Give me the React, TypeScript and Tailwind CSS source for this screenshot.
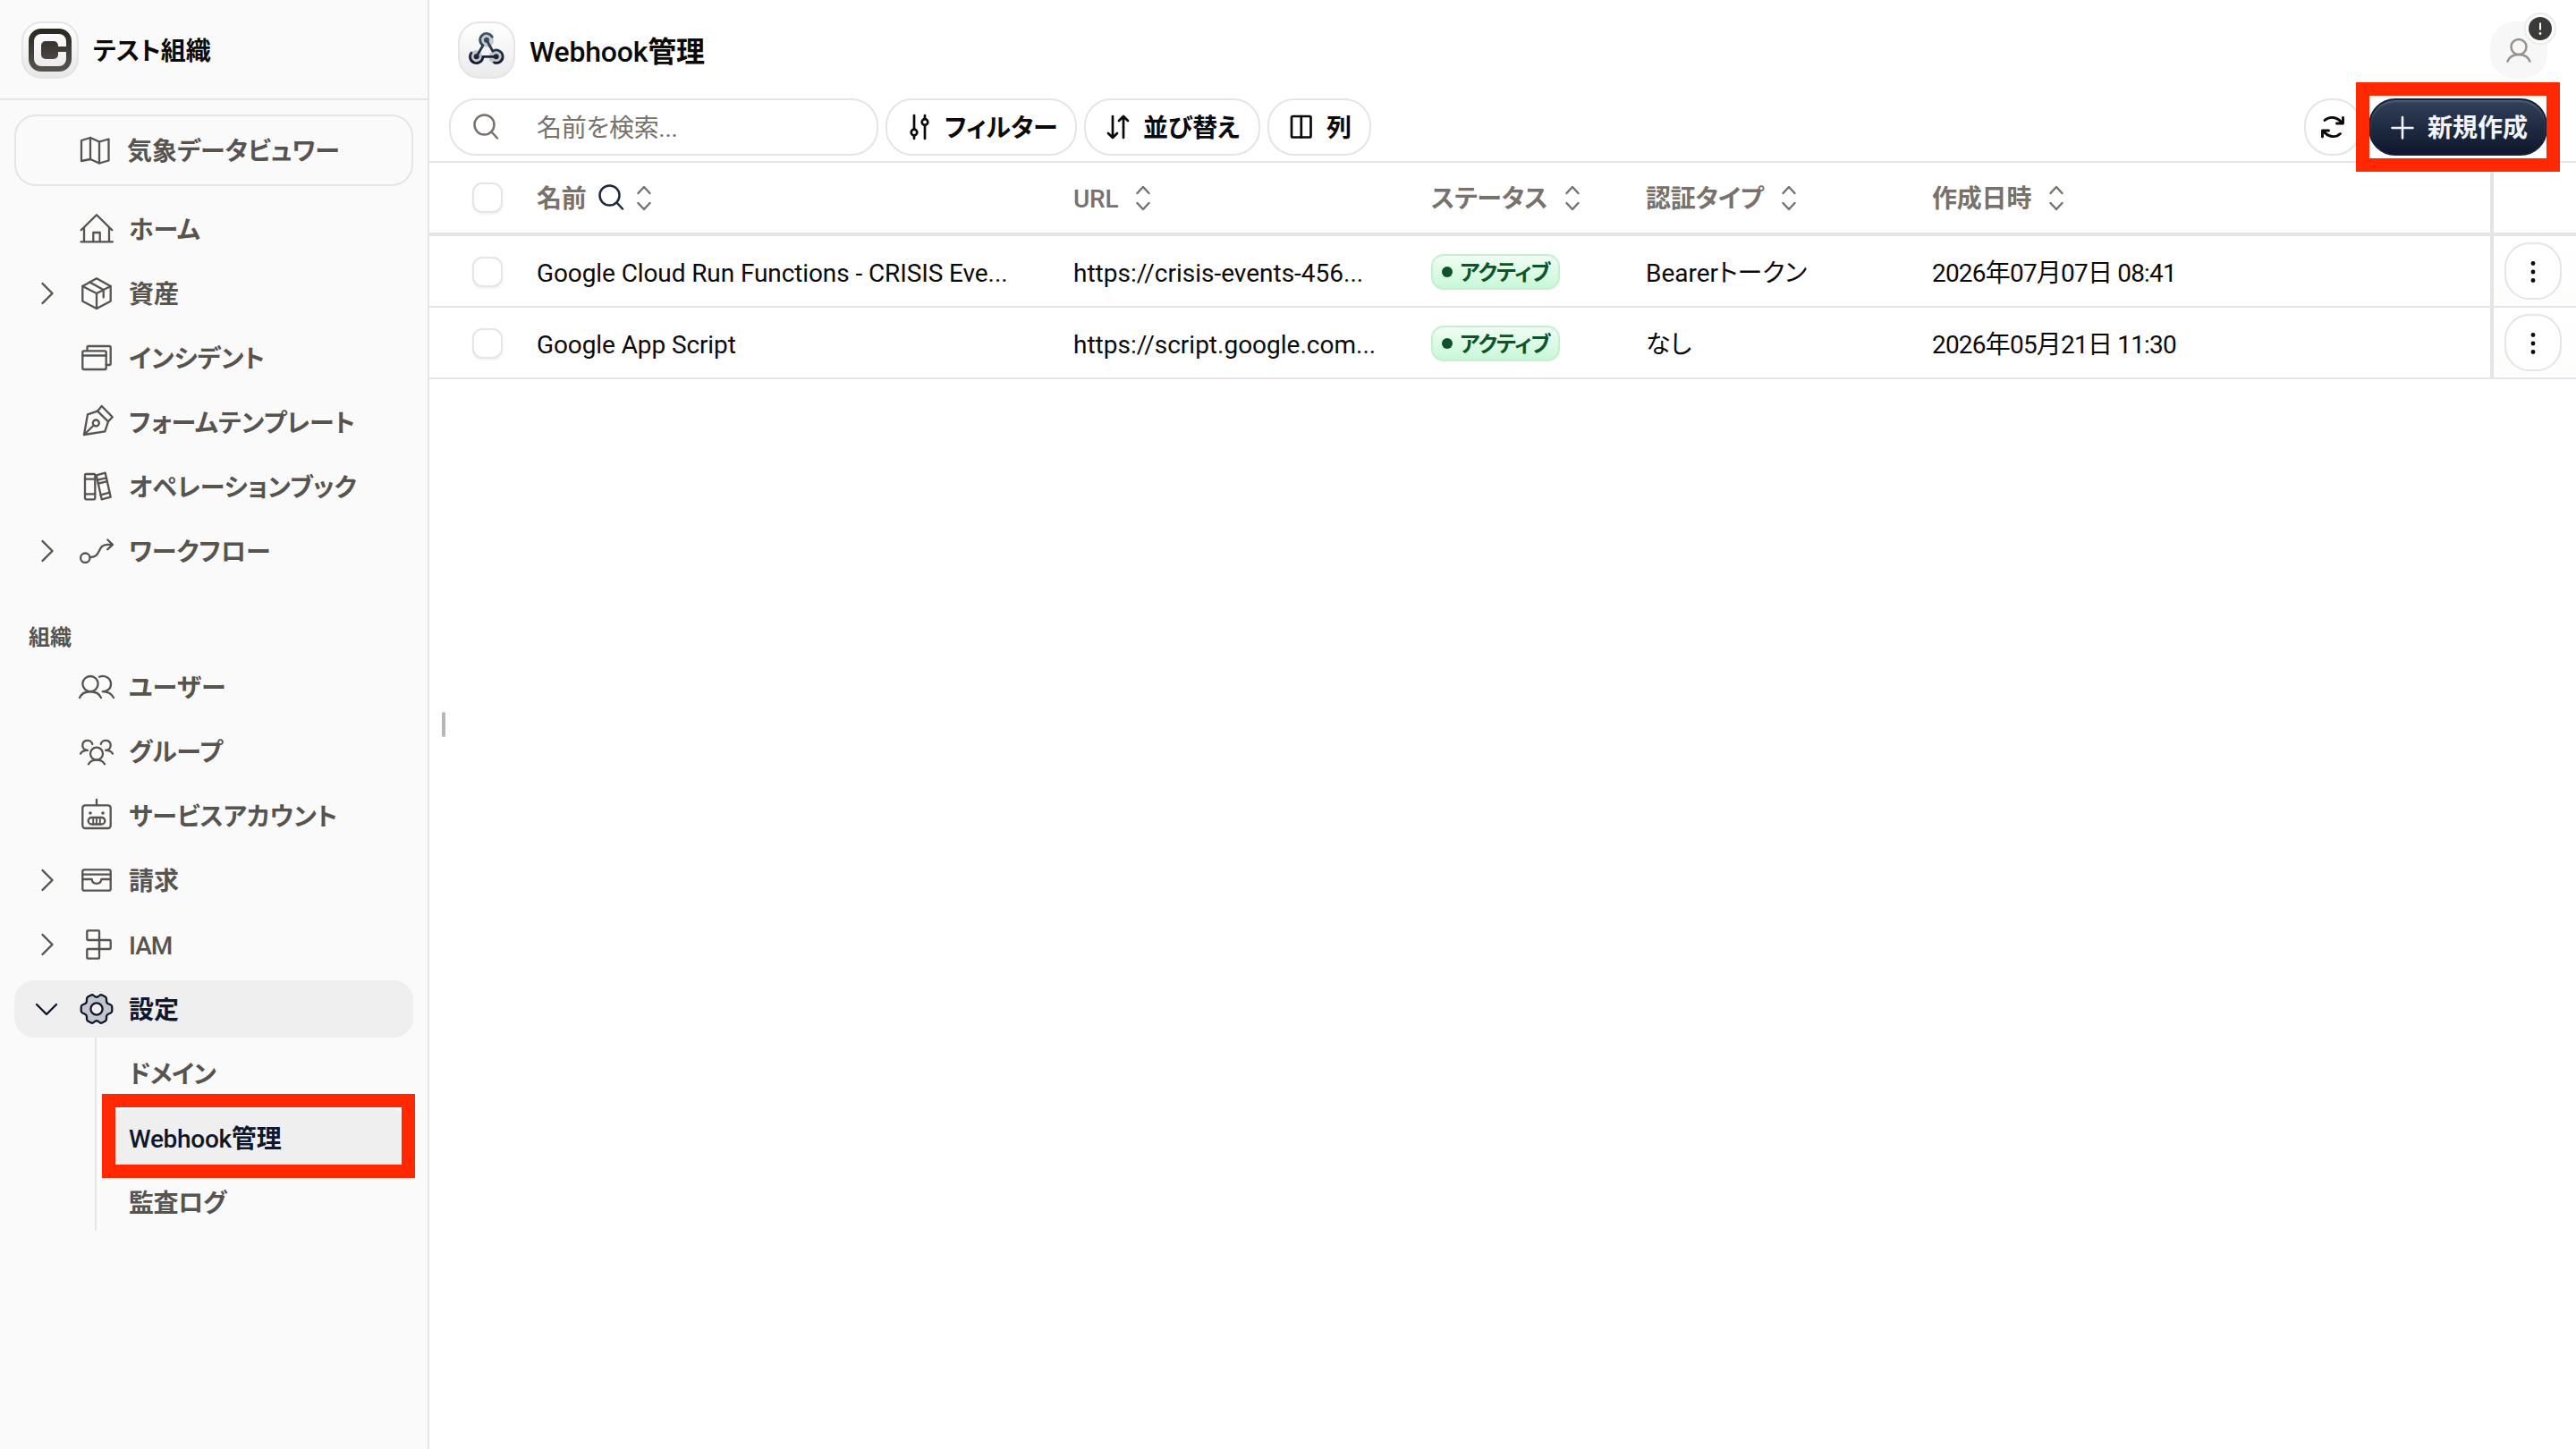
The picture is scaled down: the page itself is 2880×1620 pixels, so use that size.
import type { ReactNode } from 'react';
import clsx from 'clsx';

type NavItem = {
  label: string;
  icon: ReactNode;
  expandable?: boolean;
  latin?: boolean;
};

type Webhook = {
  name: string;
  url: string;
  auth: string;
  createdAt: string;
};

function Icon({ children }: { children: ReactNode }) {
  return (
    <svg
      viewBox="0 0 48 48"
      fill="none"
      stroke="currentColor"
      strokeWidth={2.3}
      strokeLinecap="round"
      strokeLinejoin="round"
      className="size-12 shrink-0"
    >
      {children}
    </svg>
  );
}

function Chevron({ open }: { open?: boolean }) {
  return (
    <svg
      viewBox="0 0 32 32"
      fill="none"
      stroke="currentColor"
      strokeWidth={2.4}
      strokeLinecap="round"
      strokeLinejoin="round"
      className="size-8 shrink-0"
    >
      <path d={open ? 'M5 11L16 22L27 11' : 'M10.5 5L21.5 16L10.5 27'} />
    </svg>
  );
}

const MapIcon = (
  <Icon>
    <path d="M7 13L17 10L27 14.5L37.5 11.5V35.5L27 38.5L17 34L7 36Z" />
    <path d="M17 10V34M27 14.5V38.5" />
  </Icon>
);

const HomeIcon = (
  <Icon>
    <path d="M6.7 25.3L24 8.3L41.3 25.3M10 22.5V38M38 22.5V38M6.5 38.3H42" />
    <path d="M20.3 38V28H27.7V38" />
  </Icon>
);

const BoxIcon = (
  <Icon>
    <path d="M24 7.3L39.7 16V32.7L24 41L8.3 32.7V16Z" />
    <path d="M8.3 16L24 24L39.7 16M24 24V41M16.3 11.5L31.7 20V28.5" />
  </Icon>
);

const WindowsIcon = (
  <Icon>
    <rect x="8.3" y="16.3" width="26.4" height="20.7" rx="1.5" />
    <path d="M8.3 21.5H34.7M13.5 16V12.5Q13.5 11 15 11H38.2Q39.7 11 39.7 12.5V30.5Q39.7 32 38.2 32H34.7" />
  </Icon>
);

const PenIcon = (
  <Icon>
    <path d="M10 38L14 15.3L25 11.7L37 23.3L33.3 34.3Z" />
    <path d="M25 11.7L29.7 6L41.7 18.3L37 23.3M10 38L20.8 27.5" />
    <circle cx="23.3" cy="25" r="3.5" />
  </Icon>
);

const BooksIcon = (
  <Icon>
    <rect x="11" y="10" width="11.3" height="28.3" rx="1.2" />
    <path d="M11 15.7H22.3M11 32.3H22.3" />
    <path d="M23.7 11.3L33.7 8.7L39.7 35.7L29.7 38.3Z" />
    <path d="M24.7 16.7L35 14.3M25.7 20.7L36 18.2M28.5 33.3L38.7 30.7" />
  </Icon>
);

const FlowIcon = (
  <Icon>
    <circle cx="11.3" cy="31.7" r="5.2" />
    <path d="M16.8 31C29.5 31.5 24 17 36 16.8H41.7M36.3 11.5L42 16.8L36.3 22.2" />
  </Icon>
);

const UsersIcon = (
  <Icon>
    <circle cx="17" cy="20.6" r="8.6" />
    <path d="M5 36C9 27 25 27 29 36M27 12.8C33 10 40 14 40 20.7C40 26 36 29.2 30.8 29.2C36.5 29.2 40.5 31.5 43 36" />
  </Icon>
);

const GroupIcon = (
  <Icon>
    <circle cx="24" cy="26.6" r="7" />
    <path d="M15 38.3C18.5 32 29.5 32 33 38.3" />
    <path d="M19.3 16C18 10 8.3 10.5 8.3 17.3C8.3 21 11 22.8 14 22.8C10.5 22.8 7.5 24 6 26.6" />
    <path d="M28.7 16C30 10 39.7 10.5 39.7 17.3C39.7 21 37 22.8 34 22.8C37.5 22.8 40.5 24 42 26.6" />
  </Icon>
);

const RobotIcon = (
  <Icon>
    <rect x="8.3" y="12.3" width="31.4" height="25.7" rx="3" />
    <rect x="14.7" y="26" width="18.6" height="7.5" rx="3.7" />
    <path d="M24 6V12" />
    <path d="M20.2 26V33.5M24 26V33.5M27.8 26V33.5" strokeWidth={1.9} />
    <circle cx="17" cy="21" r="1" fill="currentColor" strokeWidth={1.5} />
    <circle cx="31" cy="21" r="1" fill="currentColor" strokeWidth={1.5} />
  </Icon>
);

const BillingIcon = (
  <Icon>
    <rect x="8.3" y="12.3" width="31.4" height="23.4" rx="2" />
    <path d="M8.3 17.7H39.7M8.3 23H18.7C19 26 21 27.8 24 27.8C27 27.8 29 26 29.3 23H39.7" />
  </Icon>
);

const IamIcon = (
  <Icon>
    <rect x="13.3" y="8.3" width="13.7" height="10.7" rx="1" />
    <rect x="27" y="19" width="12.7" height="10" rx="1" />
    <rect x="13.3" y="29" width="13.7" height="10.7" rx="1" />
    <path d="M27 17V31" />
  </Icon>
);

const GearIcon = (
  <Icon>
    <path
      d="M18.5 8.3Q19.500 8 20.500 8.800L22.500 10.300Q24 11.200 25.500 10.300L27.500 8.800Q28.500 8 29.500 8.300L33.500 10.300Q35 11.200 35 12.800V15.500Q35.200 17.300 37 18.300L39.500 19.300Q41.300 20 41.300 22V26Q41.300 28 39.500 28.700L37 29.700Q35.200 30.700 35 32.500V35.200Q35 36.800 33.500 37.700L29.500 39.700Q28.500 40 27.500 39.200L25.500 37.700Q24 36.800 22.500 37.700L20.500 39.200Q19.500 40 18.500 39.700L14.500 37.700Q13 36.800 13 35.200V32.500Q12.800 30.700 11 29.700L8.500 28.700Q6.700 28 6.700 26V22Q6.700 20 8.500 19.300L11 18.300Q12.800 17.300 13 15.500V12.800Q13 11.200 14.500 10.300Z"
      fill="#c3c6cc"
    />
    <circle cx="24" cy="24" r="6.6" fill="#efefef" />
  </Icon>
);

const mainNav: NavItem[] = [
  { label: 'ホーム', icon: HomeIcon },
  { label: '資産', icon: BoxIcon, expandable: true },
  { label: 'インシデント', icon: WindowsIcon },
  { label: 'フォームテンプレート', icon: PenIcon },
  { label: 'オペレーションブック', icon: BooksIcon },
  { label: 'ワークフロー', icon: FlowIcon, expandable: true },
];

const orgNav: NavItem[] = [
  { label: 'ユーザー', icon: UsersIcon },
  { label: 'グループ', icon: GroupIcon },
  { label: 'サービスアカウント', icon: RobotIcon },
  { label: '請求', icon: BillingIcon, expandable: true },
  { label: 'IAM', icon: IamIcon, expandable: true, latin: true },
];

const webhooks: Webhook[] = [
  {
    name: 'Google Cloud Run Functions - CRISIS Eve...',
    url: 'https://crisis-events-456...',
    auth: 'Bearerトークン',
    createdAt: '2026年07月07日 08:41',
  },
  {
    name: 'Google App Script',
    url: 'https://script.google.com...',
    auth: 'なし',
    createdAt: '2026年05月21日 11:30',
  },
];

function NavRow({ item }: { item: NavItem }) {
  return (
    <li className="flex h-16 items-center rounded-3xl pl-4">
      <span className="flex w-[52px] pl-[5px]">{item.expandable && <Chevron />}</span>
      {item.icon}
      <span className={clsx('ml-3 pt-1', item.latin ? 'font-medium tracking-[-1px]' : 'font-bold')}>{item.label}</span>
    </li>
  );
}

function Sidebar() {
  return (
    <aside className="flex w-[480px] shrink-0 flex-col border-r-2 border-[#e5e5e5] bg-[#fafafa] text-[#57534e]">
      <div className="flex h-28 shrink-0 items-center gap-4 border-b-2 border-[#e5e5e5] pt-0.5 pl-6">
        <div className="flex size-16 items-center justify-center rounded-[22px] border-2 border-[#e5e5e5] bg-linear-to-b from-white to-[#e7e7e7]">
          <svg viewBox="0 0 48 48" className="size-12" fill="none">
            <defs>
              <linearGradient id="brand" x1="0" y1="0" x2="0" y2="48" gradientUnits="userSpaceOnUse">
                <stop stopColor="#292521" />
                <stop offset="1" stopColor="#57534e" />
              </linearGradient>
            </defs>
            <rect x="3" y="3" width="42" height="42" rx="11" stroke="url(#brand)" strokeWidth="6" />
            <rect x="14" y="14" width="19" height="20" rx="5" fill="url(#brand)" />
            <rect x="30" y="20" width="14" height="6" fill="url(#brand)" />
          </svg>
        </div>
        <span className="pt-1 font-bold text-[#0c0a09]">テスト組織</span>
      </div>

      <nav className="flex flex-col pt-4 pr-4 pl-4">
        <div className="flex h-20 items-center rounded-3xl border-2 border-[#e5e5e5] pl-[66px]">
          {MapIcon}
          <span className="ml-[10px] pt-1 font-bold">気象データビュワー</span>
        </div>

        <ul className="mt-4 flex flex-col gap-2">
          {mainNav.map((item) => (
            <NavRow key={item.label} item={item} />
          ))}
        </ul>

        <p className="mt-11 h-10 pl-4 text-[24px] leading-[42px] font-bold">組織</p>

        <ul className="mt-1 flex flex-col gap-2">
          {orgNav.map((item) => (
            <NavRow key={item.label} item={item} />
          ))}
          <li className="flex h-16 items-center rounded-[22px] bg-[#efefef] pl-4 text-[#0f172b]">
            <span className="flex w-[52px] pl-1">
              <Chevron open />
            </span>
            {GearIcon}
            <span className="ml-3 pt-1 font-bold">設定</span>
          </li>
        </ul>

        {/* Settings submenu */}
        <ul className="ml-[90px] flex flex-col gap-2 border-l-2 border-[#e5e5e5] pt-2 pl-2">
          <li className="flex h-16 items-center pt-1 pl-7 font-bold tracking-[-0.8px]">ドメイン</li>
          <li className="relative flex h-16 items-center rounded-3xl bg-[#efefef] pt-1 pl-7 text-[#0f172b]">
            <span className="font-medium tracking-[-0.3px]">Webhook</span>
            <span className="font-bold">管理</span>
            <span className="absolute top-[-17px] left-[-2px] h-[94px] w-[350px] border-[15px] border-[#ff2800]" />
          </li>
          <li className="flex h-16 items-center pt-1 pl-7 font-bold tracking-[-0.5px]">監査ログ</li>
        </ul>
      </nav>
    </aside>
  );
}

function SearchIcon() {
  return (
    <svg viewBox="0 0 32 32" fill="none" stroke="currentColor" strokeWidth={2.5} strokeLinecap="round" className="size-8">
      <circle cx="13.5" cy="13.5" r="11" />
      <path d="M21.5 21.5L28 28.5" />
    </svg>
  );
}

function SortIcon() {
  return (
    <svg
      viewBox="0 0 32 32"
      fill="none"
      stroke="currentColor"
      strokeWidth={2.4}
      strokeLinecap="round"
      strokeLinejoin="round"
      className="size-8"
    >
      <path d="M9.5 11L16 4L22.5 11M9.5 22L16 29L22.5 22" />
    </svg>
  );
}

function Header() {
  return (
    <header className="flex h-[110px] items-center px-8 pt-0.5">
      <div className="flex size-16 items-center justify-center rounded-[24px] border-2 border-[#e5e5e5] bg-linear-to-b from-white to-[#ebebeb]">
        <svg viewBox="0 0 48 48" fill="none" strokeLinecap="round" strokeLinejoin="round" className="size-12">
          <defs>
            <linearGradient id="hook" x1="0" y1="5" x2="0" y2="40" gradientUnits="userSpaceOnUse">
              <stop stopColor="#45556c" />
              <stop offset="1" stopColor="#0f172b" />
            </linearGradient>
          </defs>
          <g fill="#1d293d" opacity={0.22}>
            <circle cx="25" cy="13.7" r="7" />
            <circle cx="12" cy="31.3" r="7" />
            <circle cx="33.5" cy="32" r="7" />
          </g>
          <path
            d="M30.3 9.3A7.2 7.2 0 1 0 20 18.7L12.7 31.3M24 12.7L30.9 25.2A7.200 7.200 0 1 1 32.500 38M7 27A7.200 7.200 0 1 0 19.900 31.300H34.700"
            stroke="url(#hook)"
            strokeWidth={2.8}
          />
          <g fill="url(#hook)">
            <circle cx="24" cy="12.7" r="3" />
            <circle cx="12.7" cy="31.3" r="3" />
            <circle cx="34.7" cy="31.3" r="3" />
          </g>
        </svg>
      </div>
      <h1 className="ml-4 pt-1 text-[32px] tracking-[-0.2px] text-[#0c0a09]">
        <span className="font-medium">Webhook</span>
        <span className="font-bold">管理</span>
      </h1>

      <div className="relative ml-auto flex size-16 items-center justify-center rounded-[28px] bg-[#f7f7f7] text-[#98918b]">
        <svg viewBox="0 0 32 32" fill="none" stroke="currentColor" strokeWidth={2.5} strokeLinecap="round" className="size-8">
          <circle cx="16" cy="12.5" r="8.5" />
          <path d="M3.5 28.5C7.5 18.500 24.500 18.500 28.500 28.500" />
        </svg>
        <span className="absolute -top-[10px] -right-[10px] flex size-9 items-center justify-center rounded-full border-2 border-[#ececec] bg-white">
          <span className="flex size-[26px] items-center justify-center rounded-full bg-[#3a3a38]">
            <svg viewBox="0 0 26 26" className="size-[26px]">
              <path d="M13 6.5V14.5" stroke="#fff" strokeWidth={2} />
              <circle cx="13" cy="18.5" r="1.4" fill="#fff" />
            </svg>
          </span>
        </span>
      </div>
    </header>
  );
}

function ToolButton({ icon, label, className }: { icon: ReactNode; label: string; className: string }) {
  return (
    <button
      className={clsx(
        'flex h-16 items-center gap-3 rounded-[30px] border-2 border-[#e5e5e5] bg-white pl-5 font-bold text-[#0c0a09]',
        className,
      )}
    >
      <svg
        viewBox="0 0 32 32"
        fill="none"
        stroke="currentColor"
        strokeWidth={2.7}
        strokeLinecap="round"
        strokeLinejoin="round"
        className="size-8 shrink-0"
      >
        {icon}
      </svg>
      <span className="pt-1 whitespace-nowrap">{label}</span>
    </button>
  );
}

function Toolbar() {
  return (
    <div className="flex h-[72px] items-start gap-2 border-b-2 border-[#e5e5e5] pr-8 pl-[22px]">
      <div className="flex h-16 w-[480px] items-center rounded-[30px] border-2 border-[#e5e5e5] bg-white pl-6 text-[#78716c]">
        <SearchIcon />
        <span className="ml-10 pt-1 tracking-[-0.3px]">名前を検索...</span>
      </div>

      <ToolButton
        className="w-[214px]"
        label="フィルター"
        icon={
          <>
            <path d="M10 3V18.5M10 25.5V29M22 3V7M22 14V29" />
            <circle cx="10" cy="22" r="3.3" />
            <circle cx="22" cy="10.5" r="3.3" />
          </>
        }
      />
      <ToolButton
        className="w-[197px]"
        label="並び替え"
        icon={<path d="M10 4V28M5 23L10 28L15 23M22 28V4M17 9L22 4L27 9" />}
      />
      <ToolButton
        className="w-[116px]"
        label="列"
        icon={
          <>
            <rect x="5" y="4" width="21.5" height="23.5" rx="1.5" />
            <path d="M15.8 4V27.5" />
          </>
        }
      />

      <button className="ml-auto flex size-16 items-center justify-center rounded-[30px] border-2 border-[#e5e5e5] bg-white text-[#0c0a09]">
        <svg
          viewBox="0 0 32 32"
          fill="none"
          stroke="currentColor"
          strokeWidth={2.9}
          strokeLinecap="round"
          strokeLinejoin="round"
          className="size-8"
        >
          <path d="M7 8.5C12.500 3.500 21 4.500 26.500 11.500M27.500 5.500V12H20.500M24.500 23.500C19 28.500 11 27.500 5.500 20.500M4.500 27V20H11.500" />
        </svg>
      </button>

      <button className="relative flex h-16 w-[200px] items-center rounded-[30px] border-2 border-[#15203a] bg-linear-to-b from-[#31415a] to-[#0f172b] pl-5 font-bold text-[#f1f5f9] shadow-[inset_0_2px_2px_rgba(255,255,255,0.16)]">
        <svg viewBox="0 0 32 32" stroke="currentColor" strokeWidth={2.6} strokeLinecap="round" className="size-8">
          <path d="M16 5V28.500M4.500 17H27.500" />
        </svg>
        <span className="ml-3 pt-1 whitespace-nowrap">新規作成</span>
        <span className="absolute top-[-20px] left-[-16px] h-[100px] w-[228px] border-[15px] border-[#ff2800]" />
      </button>
    </div>
  );
}

function Checkbox() {
  return (
    <span className="block size-[34px] rounded-[11px] border-2 border-[#e5e5e5] bg-white shadow-[0_2px_3px_rgba(0,0,0,0.05)]" />
  );
}

function HeadCell({ label, searchable, latin }: { label: string; searchable?: boolean; latin?: boolean }) {
  return (
    <div className={clsx('flex items-center', latin ? 'font-medium' : 'font-bold')}>
      <span className="pt-1 tracking-[-0.2px]">{label}</span>
      {searchable && (
        <span className="ml-3 text-[#1d293d]">
          <SearchIcon />
        </span>
      )}
      <span className={searchable ? 'ml-1' : 'ml-3'}>
        <SortIcon />
      </span>
    </div>
  );
}

const columns = 'grid grid-cols-[120px_600px_400px_240px_320px_624px_96px]';

function WebhookTable() {
  return (
    <div className="text-[#0c0a09]">
      <div className={clsx(columns, 'h-[82px] items-center border-b-4 border-[#e5e5e5] text-[#78716c]')}>
        <div className="pl-12">
          <Checkbox />
        </div>
        <HeadCell label="名前" searchable />
        <HeadCell label="URL" latin />
        <HeadCell label="ステータス" />
        <HeadCell label="認証タイプ" />
        <HeadCell label="作成日時" />
        <div className="h-full border-l-4 border-[#e5e5e5]" />
      </div>

      {webhooks.map((hook) => (
        <div key={hook.name} className={clsx(columns, 'h-20 items-center border-b-2 border-[#e5e5e5]')}>
          <div className="pt-0.5 pl-12">
            <Checkbox />
          </div>
          <div className="pt-1.5 tracking-[-0.1px]">{hook.name}</div>
          <div className="pt-1.5">{hook.url}</div>
          <div className="pt-0.5">
            <span className="flex h-10 w-36 items-center rounded-[14px] border-2 border-[#c4efd1] bg-linear-to-b from-[#f0fdf4] to-[#c8f7d7] pl-[10px] text-[24px] font-bold tracking-[-0.8px] text-[#0d542b]">
              <span className="mr-2 size-3 shrink-0 rounded-full bg-[#0d542b]" />
              <span className="pt-0.5">アクティブ</span>
            </span>
          </div>
          <div className="pt-1.5">{hook.auth}</div>
          <div className="pt-1.5 tracking-[-0.8px]">{hook.createdAt}</div>
          <div className="flex h-full items-center border-l-4 border-[#e5e5e5] bg-linear-to-b from-white to-[#fdfdfc] pl-3">
            <button className="flex size-16 items-center justify-center rounded-[28px] border-2 border-[#e5e5e5] bg-white">
              <svg viewBox="0 0 32 32" fill="currentColor" className="size-8">
                <circle cx="16" cy="7.500" r="2.400" />
                <circle cx="16" cy="17" r="2.400" />
                <circle cx="16" cy="26.500" r="2.400" />
              </svg>
            </button>
          </div>
        </div>
      ))}
    </div>
  );
}

export default function App() {
  return (
    <div className="flex h-[1620px] w-[2880px] overflow-hidden bg-white font-[Roboto,'Noto_Sans_CJK_JP',sans-serif] text-[28px] leading-10 [font-feature-settings:'palt']">
      <Sidebar />
      <main className="relative flex w-[2400px] flex-col">
        <Header />
        <Toolbar />
        <WebhookTable />
        {/* Resize handle */}
        <span className="absolute top-[796px] left-[14px] h-7 w-1 rounded-full bg-[#bab6b2]" />
      </main>
    </div>
  );
}
